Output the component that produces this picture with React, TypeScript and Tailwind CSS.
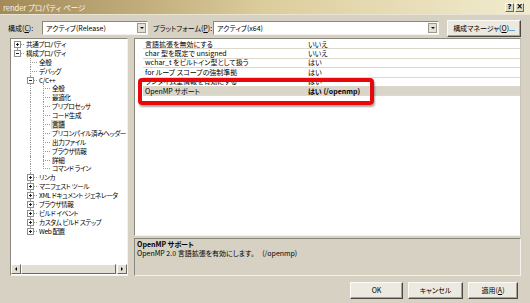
import React from "react";

type Node = {
  label: string;
  level: number;
  expander?: "plus" | "minus";
  last?: boolean;
  anc: boolean[];
  selected?: boolean;
};

const tree: Node[] = [
  { label: "共通プロパティ", level: 0, expander: "plus", anc: [] },
  { label: "構成プロパティ", level: 0, expander: "minus", last: true, anc: [] },
  { label: "全般", level: 1, anc: [false] },
  { label: "デバッグ", level: 1, anc: [false] },
  { label: "C/C++", level: 1, expander: "minus", anc: [false] },
  { label: "全般", level: 2, anc: [false, true] },
  { label: "最適化", level: 2, anc: [false, true] },
  { label: "プリプロセッサ", level: 2, anc: [false, true] },
  { label: "コード生成", level: 2, anc: [false, true] },
  { label: "言語", level: 2, anc: [false, true], selected: true },
  { label: "プリコンパイル済みヘッダー", level: 2, anc: [false, true] },
  { label: "出力ファイル", level: 2, anc: [false, true] },
  { label: "ブラウザ情報", level: 2, anc: [false, true] },
  { label: "詳細", level: 2, anc: [false, true] },
  { label: "コマンド ライン", level: 2, last: true, anc: [false, true] },
  { label: "リンカ", level: 1, expander: "plus", anc: [false] },
  { label: "マニフェスト ツール", level: 1, expander: "plus", anc: [false] },
  { label: "XML ドキュメント ジェネレータ", level: 1, expander: "plus", anc: [false] },
  { label: "ブラウザ情報", level: 1, expander: "plus", anc: [false] },
  { label: "ビルド イベント", level: 1, expander: "plus", anc: [false] },
  { label: "カスタム ビルド ステップ", level: 1, expander: "plus", anc: [false] },
  { label: "Web 配置", level: 1, expander: "plus", last: true, anc: [false] },
];

const props = [
  { name: "言語拡張を無効にする", value: "いいえ" },
  { name: "char 型を既定で unsigned", value: "いいえ" },
  { name: "wchar_t をビルトイン型として扱う", value: "はい" },
  { name: "for ループ スコープの強制準拠", value: "はい" },
  { name: "ランタイム型情報を有効にする", value: "はい" },
  { name: "OpenMP サポート", value: "はい (/openmp)", selected: true },
];

function Expander({ kind }: { kind: "plus" | "minus" }) {
  return (
    <div className="absolute left-[3px] top-[1px] w-[7px] h-[7px] border border-[#8f8f8f] bg-white flex items-center justify-center">
      <div className="relative w-[3px] h-[3px]">
        <div className="absolute left-0 top-[1px] w-[3px] h-[1px] bg-[#222]" />
        {kind === "plus" && <div className="absolute left-[1px] top-0 w-[1px] h-[3px] bg-[#222]" />}
      </div>
    </div>
  );
}

function TreeRow({ n, idx }: { n: Node; idx: number }) {
  const first = idx === 0;
  return (
    <div className="flex h-[8.9px] items-center">
      {n.anc.map((full, i) => (
        <div key={i} className="relative w-[13px] h-full shrink-0">
          {full && <div className="absolute left-[6px] top-0 bottom-0 border-l border-dotted border-[#9a9a9a]" />}
        </div>
      ))}
      <div className="relative w-[13px] h-full shrink-0">
        <div
          className={
            "absolute left-[6px] border-l border-dotted border-[#9a9a9a] " +
            (first ? "top-[4px] bottom-0" : n.last ? "top-0 h-[4.5px]" : "top-0 bottom-0")
          }
        />
        <div className="absolute left-[6px] top-[4px] w-[7px] border-t border-dotted border-[#9a9a9a]" />
        {n.expander && <Expander kind={n.expander} />}
      </div>
      <span
        className={
          "ml-[1px] px-[1px] whitespace-nowrap leading-[8.9px] " +
          (n.selected ? "bg-[#d8d4c8]" : "")
        }
      >
        {n.label}
      </span>
    </div>
  );
}

function Combo({ text, w }: { text: string; w: string }) {
  return (
    <div className={"h-[14px] bg-white border border-t-[#8a877c] border-l-[#8a877c] border-b-[#f4f2ec] border-r-[#f4f2ec] flex items-center " + w}>
      <span className="pl-[3px] flex-1 whitespace-nowrap">{text}</span>
      <div className="w-[9px] h-[10px] mr-[1px] bg-[#e4e0d6] border border-[#9c998f] flex items-center justify-center">
        <div className="w-0 h-0 border-l-[2px] border-r-[2px] border-t-[2px] border-l-transparent border-r-transparent border-t-[#111]" />
      </div>
    </div>
  );
}

function Btn({ children, w }: { children: React.ReactNode; w: string }) {
  return (
    <div
      className={
        "h-[17px] bg-[#ece9e0] border border-t-[#fbfaf6] border-l-[#fbfaf6] border-b-[#4a4840] border-r-[#4a4840] shadow-[inset_-1px_-1px_0_#a5a195] flex items-center justify-center whitespace-nowrap " +
        w
      }
    >
      {children}
    </div>
  );
}

export default function App() {
  return (
    <div className="w-[530px] h-[303px] bg-[#d6d1c3] text-black text-[7px] leading-[9px] font-['Noto_Sans_CJK_JP',sans-serif] [font-feature-settings:'palt'] flex flex-col overflow-hidden">
      {/* title bar */}
      <div className="h-[15px] bg-gradient-to-r from-[#a38a58] via-[#dccd9c] to-[#f1ebce] flex items-center justify-between pl-[3px] pr-[6px] border-b border-[#e9e4d4]">
        <span className="text-[#fbf8ee] text-[7.5px] whitespace-nowrap">render プロパティ ページ</span>
        <div className="flex gap-[1px]">
          <div className="w-[9px] h-[9px] bg-[#ddd8c8] border border-t-white border-l-white border-b-[#666] border-r-[#666] flex items-center justify-center text-[7px] leading-none font-bold font-['DejaVu_Sans',sans-serif]">?</div>
          <div className="w-[9px] h-[9px] bg-[#ddd8c8] border border-t-white border-l-white border-b-[#666] border-r-[#666] flex items-center justify-center text-[8px] leading-none font-bold font-['DejaVu_Sans',sans-serif]">×</div>
        </div>
      </div>

      {/* config row */}
      <div className="mt-[6px] h-[14px] flex items-center pl-[8px]">
        <span className="w-[34px] whitespace-nowrap">
          構成(<span className="underline">C</span>):
        </span>
        <Combo text="アクティブ(Release)" w="w-[106px]" />
        <span className="ml-[5px] w-[60px] whitespace-nowrap">
          プラットフォーム(<span className="underline">P</span>):
        </span>
        <Combo text="アクティブ(x64)" w="w-[226px]" />
        <div className="ml-[8px]">
          <Btn w="w-[74px] h-[15px]">
            構成マネージャ(<span className="underline">O</span>)...
          </Btn>
        </div>
      </div>

      {/* main */}
      <div className="mt-[3px] flex pl-[10px]">
        {/* tree */}
        <div className="w-[118px] h-[238px] bg-white border border-t-[#8a877c] border-l-[#8a877c] border-b-[#f4f2ec] border-r-[#f4f2ec] flex flex-col">
          <div className="flex-1 pt-[1px] overflow-hidden text-[6.6px] tracking-[-0.4px]">
            {tree.map((n, i) => (
              <TreeRow key={i} n={n} idx={i} />
            ))}
          </div>
          {/* horizontal scrollbar */}
          <div className="h-[10px] mb-[1px] flex bg-[#ece9e0]">
            <div className="w-[10px] h-full bg-[#e2ded3] border border-t-white border-l-white border-b-[#6b685f] border-r-[#6b685f] flex items-center justify-center">
              <div className="w-0 h-0 border-t-[2px] border-b-[2px] border-r-[2px] border-t-transparent border-b-transparent border-r-black" />
            </div>
            <div className="flex-1 h-full bg-[#e2ded3] border border-t-white border-l-white border-b-[#6b685f] border-r-[#6b685f] mr-[1px]" />
            <div className="w-[10px] h-full bg-[#e2ded3] border border-t-white border-l-white border-b-[#6b685f] border-r-[#6b685f] flex items-center justify-center">
              <div className="w-0 h-0 border-t-[2px] border-b-[2px] border-l-[2px] border-t-transparent border-b-transparent border-l-black" />
            </div>
          </div>
        </div>

        {/* right column */}
        <div className="ml-[6px] w-[387px] flex flex-col">
          <div className="relative h-[198px] bg-white border border-t-[#8a877c] border-l-[#8a877c] border-b-[#f4f2ec] border-r-[#c8c3b4] pt-[1px]">
            {props.map((p, i) => (
              <div
                key={i}
                className={
                  "ml-[8px] h-[9.4px] flex items-center border-b border-[#dcd8cc] " +
                  (p.selected ? "bg-[#d9d5c9]" : "")
                }
              >
                <span className="w-[165px] pl-[2px] whitespace-nowrap">{p.name}</span>
                <span className={"whitespace-nowrap " + (p.selected ? "font-bold" : "")}>{p.value}</span>
              </div>
            ))}
            {/* red annotation box */}
            <div className="absolute left-[3px] top-[39px] w-[236px] h-[27px] border-[4px] border-[#e8070b] rounded-[4px] shadow-[1px_2px_2px_rgba(0,0,0,0.35)]" />
          </div>
          {/* description */}
          <div className="mt-[2px] h-[38px] border border-t-[#8a877c] border-l-[#8a877c] border-b-[#f4f2ec] border-r-[#f4f2ec] pl-[2px] pt-[1px]">
            <div className="font-bold whitespace-nowrap">OpenMP サポート</div>
            <div className="whitespace-nowrap">OpenMP 2.0 言語拡張を有効にします。&nbsp;&nbsp;&nbsp;&nbsp;&nbsp;(/openmp)</div>
          </div>
        </div>
      </div>

      {/* buttons */}
      <div className="mt-[6px] flex justify-end gap-[5px] pr-[12px]">
        <Btn w="w-[53px]">OK</Btn>
        <Btn w="w-[55px]">キャンセル</Btn>
        <Btn w="w-[50px]">
          適用(<span className="underline">A</span>)
        </Btn>
      </div>
    </div>
  );
}
